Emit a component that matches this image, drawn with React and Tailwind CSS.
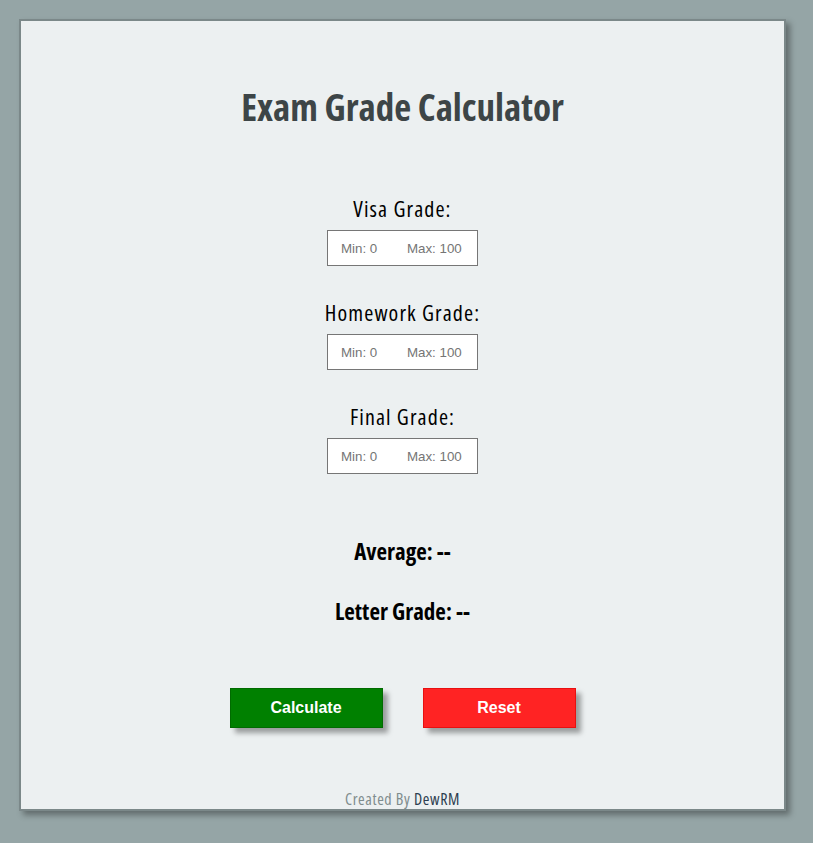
const fields = ['Visa Grade:', 'Homework Grade:', 'Final Grade:']

const display = { fontFamily: '"Open Sans", "Noto Sans", sans-serif' }
const arial = { fontFamily: '"Liberation Sans", Arial, sans-serif' }
const ph = 'Min: 0\u00a0\u00a0\u00a0\u00a0\u00a0\u00a0\u00a0\u00a0Max: 100'

export default function App() {
  return (
    <div className="min-h-screen bg-[#95a5a6] pl-[19px] pt-[19px]">
      <div className="flex h-[792px] w-[767px] flex-col items-center border-2 border-[#7b8889] bg-[#ecf0f1] shadow-[4px_4px_6px_rgba(0,0,0,0.35)]">
        <h1 style={display} className="mt-[66px] font-stretch-condensed text-[37px] font-bold leading-[40px] text-[#3d4547]">
          Exam Grade Calculator
        </h1>

        <div className="mt-[69px] flex flex-col items-center gap-[34px]">
          {fields.map((label) => (
            <div key={label} className="flex flex-col items-center">
              <label style={display} className="font-stretch-condensed text-[22px] font-medium leading-[24px] tracking-[1.1px] text-black">{label}</label>
              <input
                type="text"
                placeholder={ph}
                style={arial}
                className="mt-[10px] h-[36px] w-[151px] border border-[#767676] bg-white px-[13px] text-[13.33px] placeholder:text-[#757575] focus:outline-none"
              />
            </div>
          ))}
        </div>

        <p style={display} className="mt-[63px] font-stretch-condensed text-[23px] font-bold leading-[28px] text-black">Average: --</p>
        <p style={display} className="mt-[32px] font-stretch-condensed text-[23px] font-bold leading-[28px] text-black">Letter Grade: --</p>

        <div className="mt-[63px] flex gap-[40px]" style={arial}>
          <button className="h-[40px] w-[153px] border border-[#006b00] bg-[#008000] text-[16px] font-bold text-white shadow-[5px_5px_5px_rgba(0,0,0,0.35)]">
            Calculate
          </button>
          <button className="h-[40px] w-[153px] border border-[#e81010] bg-[#ff2323] text-[16px] font-bold text-white shadow-[5px_5px_5px_rgba(0,0,0,0.35)]">
            Reset
          </button>
        </div>

        <p style={display} className="mt-[62px] font-stretch-condensed text-[16px] leading-[18px] tracking-[0.6px] text-[#7f8c8d]">
          Created By <span className="text-[#2c3e50]">DewRM</span>
        </p>
      </div>
    </div>
  )
}
